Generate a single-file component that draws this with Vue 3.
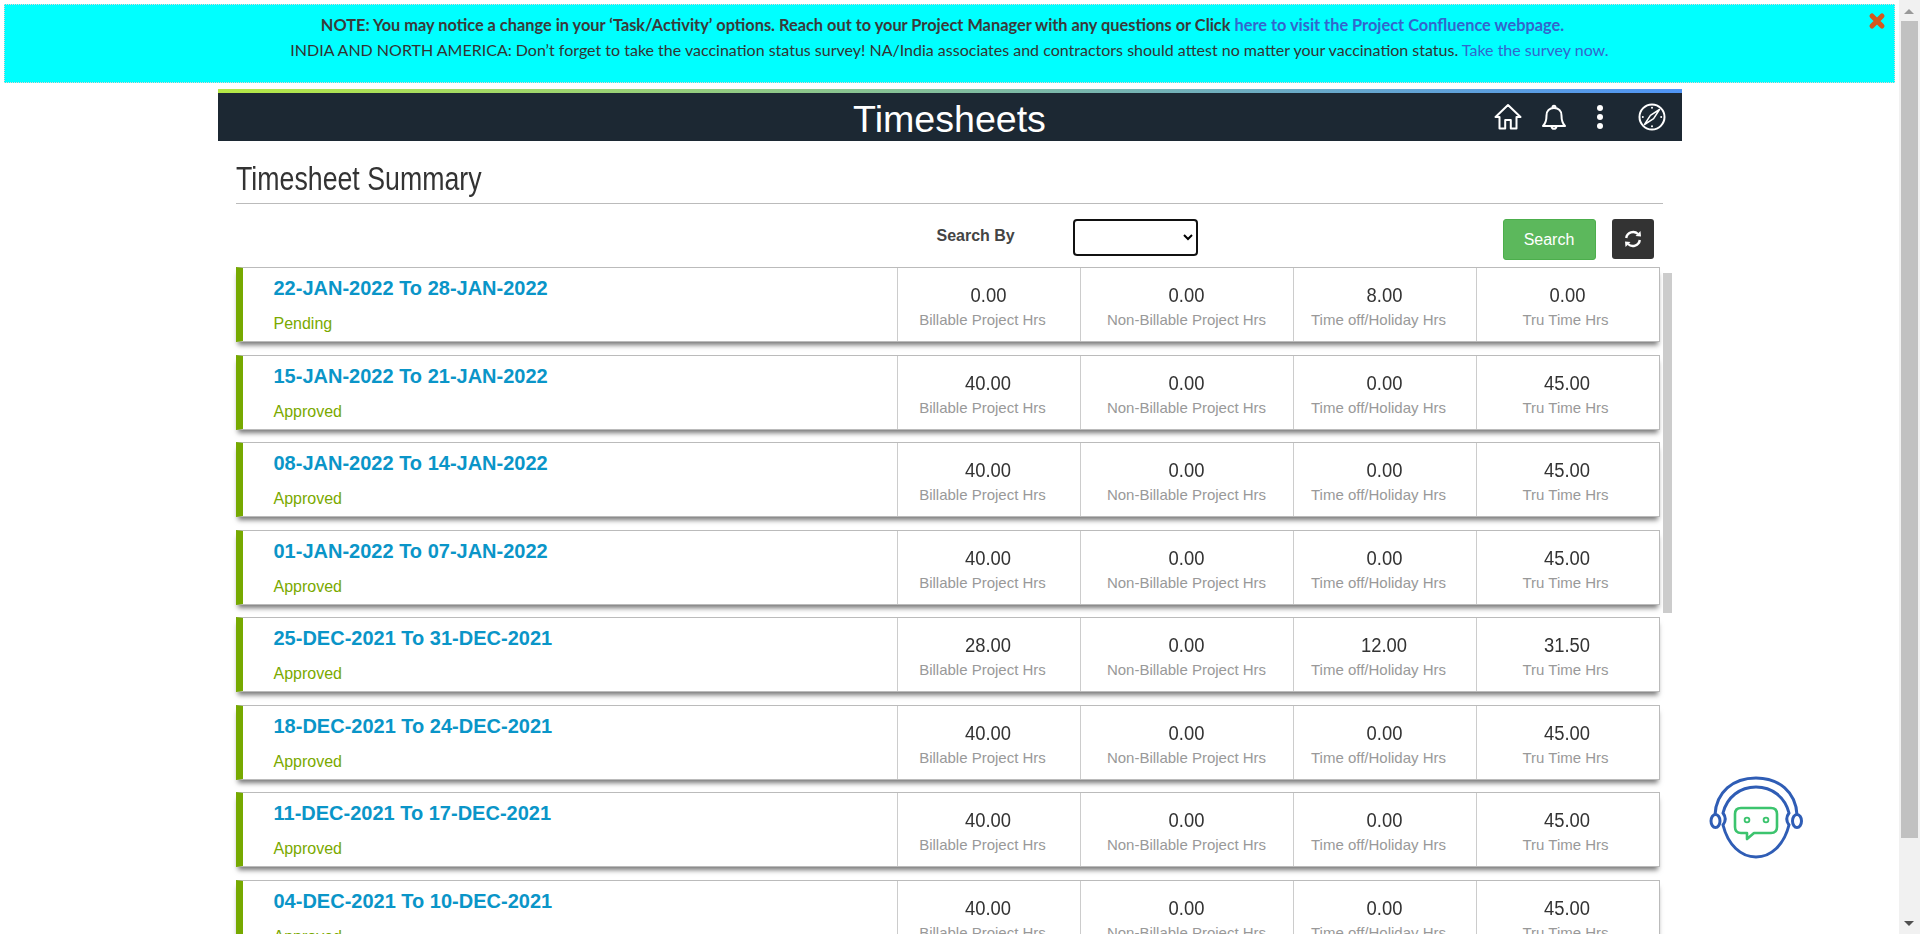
<template>
  <div class="shell">
    <div class="page">
      <div class="notice">
        <p class="notice-line first">
          NOTE: You may notice a change in your ‘Task/Activity’ options. Reach out to your Project Manager with any questions or Click
          <a href="#">here to visit the Project Confluence webpage.</a>
        </p>
        <p class="notice-line">
          INDIA AND NORTH AMERICA: Don’t forget to take the vaccination status survey! NA/India associates and contractors should attest no matter your vaccination status.
          <a href="#">Take the survey now.</a>
        </p>
        <svg class="notice-close" viewBox="0 0 18 18" width="18" height="18">
          <path d="M4 4 L14 14 M14 4 L4 14" stroke="#d4581f" stroke-width="5" stroke-linecap="round" />
        </svg>
      </div>

      <div class="wrapper">
        <div class="accent"></div>
        <header class="topbar">
          <h1>Timesheets</h1>
          <div class="topbar-icons">
            <svg class="ico" viewBox="0 0 28 28" width="28" height="28" fill="none" stroke="#fff" stroke-width="2" stroke-linejoin="round" stroke-linecap="round">
              <path d="M1.5 14 L14 2 L26.5 14 H22.5 V25.5 H16.8 V17 H11.2 V25.5 H5.5 V14 Z" />
            </svg>
            <svg class="ico" viewBox="0 0 28 28" width="28" height="28" fill="none" stroke="#fff" stroke-width="2" stroke-linejoin="round" stroke-linecap="round">
              <path d="M3 23 C6 20 6.5 17 6.5 12.5 C6.5 8 9.5 5 14 5 C18.5 5 21.5 8 21.5 12.5 C21.5 17 22 20 25 23 Z" />
              <path d="M12.5 4.5 C12.5 2 15.5 2 15.5 4.5 M11.5 23.5 C12 26.5 16 26.5 16.5 23.5" />
            </svg>
            <svg class="ico dots" viewBox="0 0 10 28" width="10" height="28" fill="#fff">
              <circle cx="5" cy="5" r="3" />
              <circle cx="5" cy="14" r="3" />
              <circle cx="5" cy="23" r="3" />
            </svg>
            <svg class="ico" viewBox="0 0 28 28" width="28" height="28" fill="none" stroke="#fff" stroke-width="2" stroke-linejoin="round">
              <circle cx="14" cy="14" r="12.5" />
              <path d="M21.5 6.5 L15.6 15.6 L6.5 21.5 L12.4 12.4 Z" stroke-width="1.5" />
              <g fill="#fff" stroke="none">
                <circle cx="14" cy="4.8" r="1" />
                <circle cx="14" cy="23.2" r="1" />
                <circle cx="4.8" cy="14" r="1" />
                <circle cx="23.2" cy="14" r="1" />
              </g>
            </svg>
          </div>
        </header>

        <main class="content">
          <h2 class="summary-title"><span>Timesheet Summary</span></h2>

          <div class="search-row">
            <label class="search-label">Search By</label>
            <select class="search-select"><option></option></select>
            <button class="btn-search">Search</button>
            <button class="btn-refresh">
              <svg viewBox="0 0 20 20" width="20" height="20" fill="none" stroke="#fff" stroke-width="2.4">
                <path d="M3.2 9 A7 7 0 0 1 15 5" />
                <path d="M16.8 11 A7 7 0 0 1 5 15" />
                <path d="M12.5 7 L18 7.5 L17.5 2 Z" fill="#fff" stroke="none" />
                <path d="M7.5 13 L2 12.5 L2.5 18 Z" fill="#fff" stroke="none" />
              </svg>
            </button>
          </div>

          <div class="list">
            <div class="list-thumb"></div>
            <div class="card" v-for="week in weeks" :key="week.range">
              <div class="card-main">
                <a class="card-range" href="#">{{ week.range }}</a>
                <span class="card-status">{{ week.status }}</span>
              </div>
              <div class="card-cell cell-a">
                <span class="cell-value">{{ week.billable }}</span>
                <span class="cell-label">Billable Project Hrs</span>
              </div>
              <div class="card-cell cell-b">
                <span class="cell-value">{{ week.nonBillable }}</span>
                <span class="cell-label">Non-Billable Project Hrs</span>
              </div>
              <div class="card-cell cell-c">
                <span class="cell-value">{{ week.timeOff }}</span>
                <span class="cell-label">Time off/Holiday Hrs</span>
              </div>
              <div class="card-cell cell-d">
                <span class="cell-value">{{ week.truTime }}</span>
                <span class="cell-label">Tru Time Hrs</span>
              </div>
            </div>
          </div>
        </main>
      </div>

      <svg class="chatbot" viewBox="0 0 96 90" width="96" height="90" fill="none">
        <g stroke="#2f5db5" stroke-width="3">
          <path d="M7 40 C8 17 25 3 48 3 C71 3 88 17 89 40" />
          <path d="M15 38 C19 22 32 12 48 12 C64 12 77 22 81 38 C78 42 78 46 81 50 C76 70 63 82 48 82 C33 82 20 70 15 50 C18 46 18 42 15 38 Z" />
          <ellipse cx="7.5" cy="46" rx="4.5" ry="6.5" />
          <ellipse cx="89" cy="46" rx="4.5" ry="6.5" />
        </g>
        <g stroke="#3cc46e" stroke-width="2.6">
          <path d="M33 33 H63 Q69 33 69 39 V52 Q69 58 63 58 H46 L39 64 V58 H33 Q27 58 27 52 V39 Q27 33 33 33 Z" stroke-linejoin="round" />
          <circle cx="39" cy="45" r="2.4" stroke-width="1.8" />
          <circle cx="58" cy="45" r="2.4" stroke-width="1.8" />
        </g>
      </svg>
    </div>

    <div class="page-scroll">
      <span class="arrow up"></span>
      <div class="page-thumb"></div>
      <span class="arrow down"></span>
    </div>
  </div>
</template>

<script setup>
const row = (range, status, billable, nonBillable, timeOff, truTime) => ({
  range, status, billable, nonBillable, timeOff, truTime
})

const weeks = [
  row('22-JAN-2022 To 28-JAN-2022', 'Pending', '0.00', '0.00', '8.00', '0.00'),
  row('15-JAN-2022 To 21-JAN-2022', 'Approved', '40.00', '0.00', '0.00', '45.00'),
  row('08-JAN-2022 To 14-JAN-2022', 'Approved', '40.00', '0.00', '0.00', '45.00'),
  row('01-JAN-2022 To 07-JAN-2022', 'Approved', '40.00', '0.00', '0.00', '45.00'),
  row('25-DEC-2021 To 31-DEC-2021', 'Approved', '28.00', '0.00', '12.00', '31.50'),
  row('18-DEC-2021 To 24-DEC-2021', 'Approved', '40.00', '0.00', '0.00', '45.00'),
  row('11-DEC-2021 To 17-DEC-2021', 'Approved', '40.00', '0.00', '0.00', '45.00'),
  row('04-DEC-2021 To 10-DEC-2021', 'Approved', '40.00', '0.00', '0.00', '45.00')
]
</script>

<style scoped>
.shell {
  display: flex;
  height: 934px;
  overflow: hidden;
  background: #fff;
  font-family: "Liberation Sans", Arial, sans-serif;
  color: #333;
}

.page {
  position: relative;
  width: 1899px;
  flex: none;
}

.notice {
  position: relative;
  height: 79px;
  margin: 4px 4px 0 4px;
  box-sizing: border-box;
  border: 1px dotted #e8d4d4;
  background: #00ffff;
  padding-top: 10px;
  text-align: center;
  font-family: Lato, "Liberation Sans", sans-serif;
  font-size: 16px;
  color: #333;
}

.notice-line {
  margin: 0;
  height: 25px;
  line-height: 20px;
}

.notice-line.first {
  font-size: 16.35px;
  font-weight: 700;
  padding-right: 14px;
  color: #3a3a3a;
}

.notice-line a {
  color: #3366cc;
  text-decoration: none;
}

.notice-close {
  position: absolute;
  top: 7px;
  right: 8px;
  filter: blur(0.6px);
}

.wrapper {
  width: 1464px;
  margin: 6px auto 0;
}

.accent {
  height: 4px;
  background: linear-gradient(90deg, #b5e845 0%, #4f94f5 100%);
}

.topbar {
  position: relative;
  height: 48px;
  background: #1c2833;
  display: flex;
  align-items: center;
  justify-content: center;
}

.topbar h1 {
  margin: 0;
  padding-top: 4px;
  font-size: 37.6px;
  font-weight: 400;
  color: #fff;
  line-height: 44px;
}

.topbar-icons {
  position: absolute;
  top: 10px;
  left: 1276px;
  display: flex;
  align-items: center;
}

.topbar-icons .ico:nth-child(1) { margin-right: 18px; }
.topbar-icons .ico:nth-child(2) { margin-right: 27px; }
.topbar-icons .ico:nth-child(3) { margin-right: 33px; }

.content {
  padding: 0 19px 0 18px;
}

.summary-title {
  margin: 0;
  height: 63px;
  box-sizing: border-box;
  border-bottom: 1px solid #bbb;
  padding-top: 18px;
  font-size: 33px;
  line-height: 40px;
  font-weight: 400;
  color: #333;
}

/* the original heading is a condensed face, which is not installed */
.summary-title span {
  display: inline-block;
  transform: scaleX(0.81);
  transform-origin: left center;
}

.search-row {
  height: 63px;
  box-sizing: border-box;
  padding-top: 15px;
  display: flex;
  align-items: flex-start;
}

.search-label {
  margin-left: 701px;
  margin-top: 1px;
  width: 136px;
  font-size: 16px;
  font-weight: 700;
  color: #444;
  line-height: 32px;
}

.search-select {
  width: 125px;
  height: 37px;
  box-sizing: border-box;
  border: 2px solid #111;
  border-radius: 4px;
  background: #fff;
}

.btn-search {
  margin-left: 305px;
  width: 93px;
  height: 41px;
  border: 1px solid #4cae4c;
  border-radius: 3px;
  background: #5cb85c;
  color: #fff;
  font-family: inherit;
  font-size: 16px;
}

.btn-refresh {
  margin-left: 16px;
  width: 42px;
  height: 40px;
  border: none;
  border-radius: 3px;
  background: #333;
  display: flex;
  align-items: center;
  justify-content: center;
  padding: 0;
}

.list {
  position: relative;
  margin-right: 3px;
}

.list-thumb {
  position: absolute;
  top: 6px;
  right: -12px;
  width: 9px;
  height: 340px;
  background: #ccc;
}

.card {
  display: grid;
  grid-template-columns: 654px 183px 213px 183px 1fr;
  height: 75px;
  margin-bottom: 12.5px;
  box-sizing: border-box;
  border: 1px solid #bbb;
  border-left: 7px solid #76a900;
  background: #fff;
  box-shadow: 0 5px 5px -2px #777;
}

.card-main {
  display: flex;
  flex-direction: column;
  padding-left: 31px;
}

.card-range {
  margin-top: 8px;
  font-size: 20px;
  font-weight: 700;
  line-height: 24px;
  color: #0a95c8;
  text-decoration: none;
}

.card-status {
  margin-top: 14px;
  font-size: 16px;
  line-height: 20px;
  color: #7aa900;
}

.card-cell {
  display: flex;
  flex-direction: column;
  align-items: center;
  border-left: 1px solid #ccc;
  padding-top: 15px;
}

.cell-value {
  font-size: 20px;
  line-height: 24px;
  color: #333;
  transform: scaleX(0.92);
}

.cell-label {
  margin-top: 4px;
  font-size: 15px;
  line-height: 18px;
  color: #999;
}

.cell-a .cell-label,
.cell-c .cell-label {
  margin-right: 12px;
}

.cell-d .cell-label {
  margin-right: 4px;
}

.chatbot {
  position: absolute;
  top: 775px;
  left: 1708px;
}

.page-scroll {
  position: relative;
  width: 21px;
  flex: none;
  background: #f1f1f1;
}

.page-thumb {
  position: absolute;
  top: 21px;
  left: 2px;
  width: 17px;
  height: 817px;
  background: #c1c1c1;
}

.arrow {
  position: absolute;
  left: 5px;
  width: 0;
  height: 0;
  border-left: 5px solid transparent;
  border-right: 5px solid transparent;
}

.arrow.up {
  top: 9px;
  border-bottom: 5px solid #999;
}

.arrow.down {
  top: 921px;
  border-top: 5px solid #505050;
}
</style>
